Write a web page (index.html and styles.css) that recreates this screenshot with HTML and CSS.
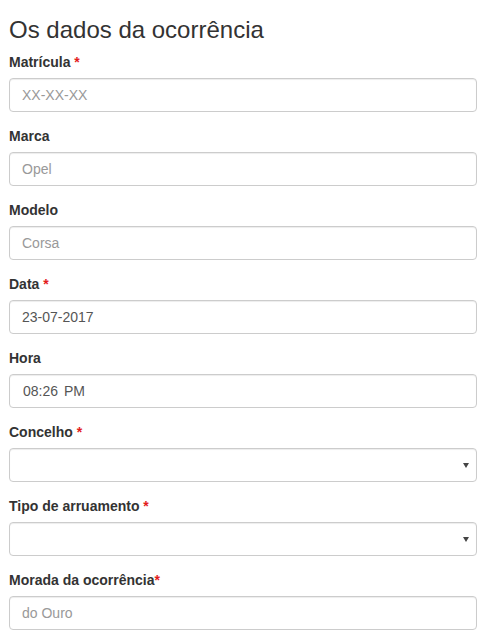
FILE: index.html
```html
<!DOCTYPE html>
<html lang="pt">
<head>
<meta charset="utf-8">
<title>Os dados da ocorrência</title>
<link rel="stylesheet" href="styles.css">
</head>
<body>
<div class="container">
  <h3 class="title">Os dados da ocorrência</h3>
  <form class="form">
    <div class="form-group">
      <label class="label">Matrícula <span class="req">*</span></label>
      <input class="form-control" type="text" placeholder="XX-XX-XX">
    </div>
    <div class="form-group">
      <label class="label">Marca</label>
      <input class="form-control" type="text" placeholder="Opel">
    </div>
    <div class="form-group">
      <label class="label">Modelo</label>
      <input class="form-control" type="text" placeholder="Corsa">
    </div>
    <div class="form-group">
      <label class="label">Data <span class="req">*</span></label>
      <input class="form-control" type="text" value="23-07-2017">
    </div>
    <div class="form-group">
      <label class="label">Hora</label>
      <input class="form-control time" type="text" value="08:26 PM">
    </div>
    <div class="form-group">
      <label class="label">Concelho <span class="req">*</span></label>
      <div class="select-wrap">
        <select class="form-control select"><option></option></select>
      </div>
    </div>
    <div class="form-group">
      <label class="label">Tipo de arruamento <span class="req">*</span></label>
      <div class="select-wrap">
        <select class="form-control select"><option></option></select>
      </div>
    </div>
    <div class="form-group">
      <label class="label">Morada da ocorrência<span class="req">*</span></label>
      <input class="form-control" type="text" placeholder="do Ouro">
    </div>
  </form>
</div>
</body>
</html>
```
FILE: styles.css
```css
* { box-sizing: border-box; }
html, body { margin: 0; padding: 0; background: #fff; }
body {
  font-family: "Liberation Sans", Arial, Helvetica, sans-serif;
  font-size: 14px;
  line-height: 1.42857;
  color: #333;
}
.container { padding: 0 13px 0 9px; }
.title {
  font-size: 24px;
  font-weight: 500;
  line-height: 1.1;
  margin: 17px 0 10px;
  color: #333;
}
.form { margin: 0; }
.form-group { margin-bottom: 15px; display: flex; flex-direction: column; }
.label {
  display: block;
  font-weight: 700;
  margin-bottom: 5px;
  max-width: 100%;
}
.req { color: #e31c1c; }
.form-control {
  display: block;
  width: 100%;
  height: 34px;
  padding: 6px 12px;
  font-family: inherit;
  font-size: 14px;
  line-height: 1.42857;
  color: #555;
  background: #fff;
  border: 1px solid #ccc;
  border-radius: 4px;
  box-shadow: inset 0 1px 1px rgba(0,0,0,.075);
  outline: none;
}
.form-control::placeholder { color: #999; opacity: 1; }
.time { padding-left: 13px; word-spacing: 2px; }
.select-wrap { position: relative; }
.select { appearance: none; -webkit-appearance: none; }
.select-wrap::after {
  content: "";
  position: absolute;
  right: 8px;
  top: 15px;
  width: 0;
  height: 0;
  border-left: 3px solid transparent;
  border-right: 3px solid transparent;
  border-top: 5px solid #444;
  pointer-events: none;
}
```
